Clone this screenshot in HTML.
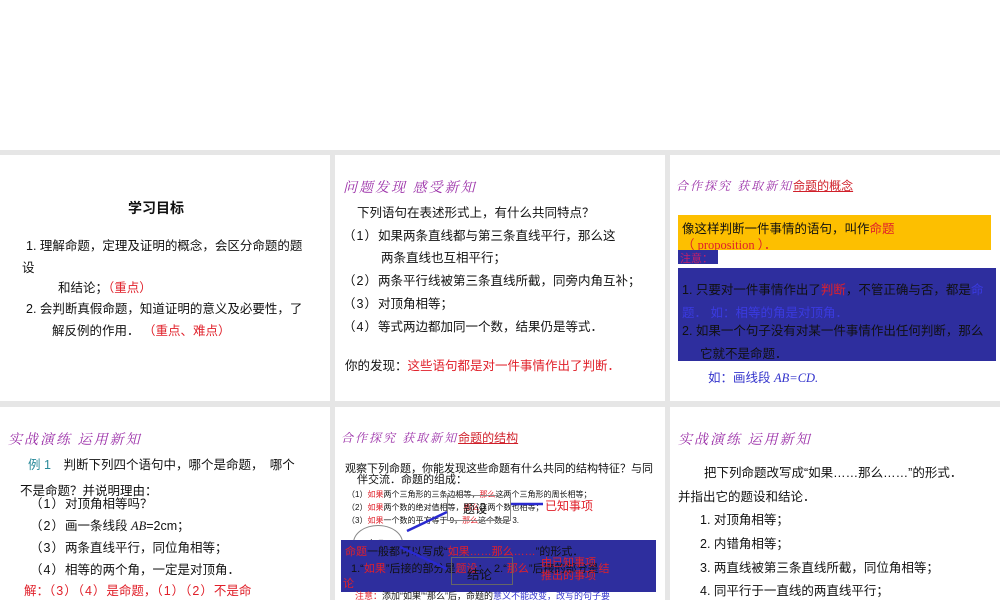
<!DOCTYPE html><html><head><meta charset="utf-8"><style>
*{margin:0;padding:0;box-sizing:border-box}
body{width:1000px;height:600px;overflow:hidden;background:#fff;position:relative;font-family:"Liberation Sans","Noto Sans CJK SC",sans-serif;font-size:12.5px;color:#111}
.bg{position:absolute;left:0;top:150px;width:1000px;height:450px;background:#e6e6e6}
.s{position:absolute;background:#fff;overflow:hidden}
.a{position:absolute;white-space:nowrap}
.r{color:#e0202a}.b{color:#3333cc}
.t{color:#9b2fa8;font-family:"Noto Serif CJK SC",serif;font-style:italic;font-size:14px;letter-spacing:2px}
.p{letter-spacing:1px}
</style></head><body>
<div class="bg"></div>
<!-- slide 1 -->
<div class="s" style="left:0;top:155px;width:330px;height:246px">
<div class="a" style="left:128px;top:43px;font-size:14px;font-weight:bold">学习目标</div>
<div class="a" style="left:26px;top:80px">1. 理解命题，定理及证明的概念，会区分命题的题</div>
<div class="a" style="left:22px;top:102px">设</div>
<div class="a" style="left:58px;top:122px">和结论；<span class="r">（重点）</span></div>
<div class="a" style="left:26px;top:143px">2. 会判断真假命题，知道证明的意义及必要性，了</div>
<div class="a" style="left:52px;top:165px">解反例的作用． <span class="r">（重点、难点）</span></div>
</div>
<!-- slide 2 -->
<div class="s" style="left:335px;top:155px;width:330px;height:246px">
<div class="a t" style="left:8px;top:22px">问题发现 感受新知</div>
<div class="a" style="left:22px;top:47px">下列语句在表述形式上，有什么共同特点？</div>
<div class="a" style="left:8px;top:70px"><span class="p">（1）</span>如果两条直线都与第三条直线平行，那么这</div>
<div class="a" style="left:46px;top:92px">两条直线也互相平行；</div>
<div class="a" style="left:8px;top:115px"><span class="p">（2）</span>两条平行线被第三条直线所截，同旁内角互补；</div>
<div class="a" style="left:8px;top:138px"><span class="p">（3）</span>对顶角相等；</div>
<div class="a" style="left:8px;top:161px"><span class="p">（4）</span>等式两边都加同一个数，结果仍是等式．</div>
<div class="a" style="left:10px;top:200px">你的发现：<span class="r">这些语句都是对一件事情作出了判断．</span></div>
</div>
<!-- slide 3 -->
<div class="s" style="left:670px;top:155px;width:330px;height:246px">
<div class="a t" style="left:6px;top:22px;font-size:12px">合作探究 获取新知<span style="color:#d0202a;font-style:normal;font-family:'Liberation Sans','Noto Sans CJK SC',sans-serif;text-decoration:underline;letter-spacing:0">命题的概念</span></div>
<div style="position:absolute;left:8px;top:60px;width:313px;height:35px;background:#fdbf00"></div>
<div class="a" style="left:12px;top:63px">像这样判断一件事情的语句，叫作<span class="r">命题</span></div>
<div class="a r" style="left:12px;top:79px;font-family:'Liberation Serif',serif">（ proposition ）．</div>
<div style="position:absolute;left:8px;top:95px;width:40px;height:14px;background:#2e2e9e"></div>
<div class="a" style="left:10px;top:95px;color:#c0206a;font-size:11px">注意：</div>
<div style="position:absolute;left:8px;top:113px;width:318px;height:93px;background:#2e2e9e"></div>
<div class="a" style="left:12px;top:124px;color:#111">1. 只要对一件事情作出了<span class="r">判断</span>，不管正确与否，都是<span style="color:#3a3ae0">命</span></div>
<div class="a" style="left:12px;top:147px;color:#3a3ae0">题． 如：相等的角是对顶角．</div>
<div class="a" style="left:12px;top:165px">2. 如果一个句子没有对某一件事情作出任何判断，那么</div>
<div class="a" style="left:30px;top:188px">它就不是命题．</div>
<div class="a b" style="left:38px;top:212px">如：画线段 <i style="font-family:'Liberation Serif',serif">AB=CD.</i></div>
</div>
<!-- slide 4 -->
<div class="s" style="left:0;top:407px;width:330px;height:193px">
<div class="a t" style="left:8px;top:22px">实战演练 运用新知</div>
<div class="a" style="left:28px;top:47px"><span style="color:#2a8a9a">例 1</span>　判断下列四个语句中，哪个是命题，　哪个</div>
<div class="a" style="left:20px;top:73px">不是命题？并说明理由：</div>
<div class="a" style="left:30px;top:86px"><span class="p">（1）</span>对顶角相等吗？</div>
<div class="a" style="left:30px;top:108px"><span class="p">（2）</span>画一条线段 <i style="font-family:'Liberation Serif',serif">AB</i>=2cm；</div>
<div class="a" style="left:30px;top:130px"><span class="p">（3）</span>两条直线平行，同位角相等；</div>
<div class="a" style="left:30px;top:152px"><span class="p">（4）</span>相等的两个角，一定是对顶角．</div>
<div class="a r" style="left:24px;top:173px">解：<span class="p">（3）（4）</span>是命题，<span class="p">（1）（2）</span>不是命</div>
</div>
<!-- slide 5 -->
<div class="s" style="left:335px;top:407px;width:330px;height:193px">
<div class="a t" style="left:6px;top:22px;font-size:12px">合作探究 获取新知<span style="color:#d0202a;font-style:normal;font-family:'Liberation Sans','Noto Sans CJK SC',sans-serif;text-decoration:underline;letter-spacing:0">命题的结构</span></div>
<div class="a" style="left:10px;top:53px;font-size:11px">观察下列命题，你能发现这些命题有什么共同的结构特征？与同</div>
<div class="a" style="left:22px;top:64px;font-size:11px">伴交流．命题的组成：</div>
<div class="a" style="left:12px;top:82px;font-size:8px">（1）<span class="r">如果</span>两个三角形的三条边相等，<span class="r">那么</span>这两个三角形的周长相等；</div>
<div class="a" style="left:12px;top:95px;font-size:8px">（2）<span class="r">如果</span>两个数的绝对值相等，<span class="r">那么</span>这两个数也相等；</div>
<div class="a" style="left:12px;top:108px;font-size:8px">（3）<span class="r">如果</span>一个数的平方等于 9，<span class="r">那么</span>这个数是 3.</div>
<div style="position:absolute;left:112px;top:88px;width:64px;height:26px;border:1px solid #888"></div>
<div class="a" style="left:128px;top:93px;font-size:12px">题设</div>
<div class="a r" style="left:210px;top:90px;font-size:12px">已知事项</div>
<div style="position:absolute;left:18px;top:118px;width:50px;height:36px;border:1px solid #888;border-radius:50%"></div>
<div class="a" style="left:30px;top:128px">命题</div>
<div style="position:absolute;left:6px;top:133px;width:315px;height:52px;background:#2e2e9e"></div>
<div class="a" style="left:10px;top:136px;font-size:11px"><span class="r">命题</span>一般都可以写成“<span class="r">如果……那么……</span>”的形式．</div>
<div class="a" style="left:16px;top:153px;font-size:11px">1.“<span class="r">如果</span>”后接的部分是<span class="r">题设</span>；　2.“<span class="r">那么</span>”后接的部分是<span class="r">结</span></div>
<div class="a r" style="left:8px;top:168px;font-size:11px">论</div>
<div style="position:absolute;left:116px;top:150px;width:62px;height:28px;border:1px solid #666"></div>
<div class="a" style="left:132px;top:157px">结论</div>
<div class="a r" style="left:206px;top:150px;font-size:11px;text-align:center;line-height:13px">由已知事项<br>推出的事项</div>
<div class="a" style="left:20px;top:182px;font-size:9px"><span class="r">注意：</span>添加“如果”“那么”后，命题的<span class="b">意义不能改变，改写的句子要</span></div>
<svg style="position:absolute;left:0;top:0" width="330" height="193"><g stroke="#2a2ad0" stroke-width="2.5" fill="none"><line x1="72" y1="124" x2="112" y2="105"/><line x1="65" y1="140" x2="112" y2="162"/><line x1="176" y1="97" x2="208" y2="97"/></g></svg>
</div>
<!-- slide 6 -->
<div class="s" style="left:670px;top:407px;width:330px;height:193px">
<div class="a t" style="left:8px;top:22px">实战演练 运用新知</div>
<div class="a" style="left:34px;top:55px">把下列命题改写成“如果……那么……”的形式．</div>
<div class="a" style="left:8px;top:79px">并指出它的题设和结论．</div>
<div class="a" style="left:30px;top:102px">1. 对顶角相等；</div>
<div class="a" style="left:30px;top:126px">2. 内错角相等；</div>
<div class="a" style="left:30px;top:150px">3. 两直线被第三条直线所截，同位角相等；</div>
<div class="a" style="left:30px;top:173px">4. 同平行于一直线的两直线平行；</div>
</div>
</body></html>
